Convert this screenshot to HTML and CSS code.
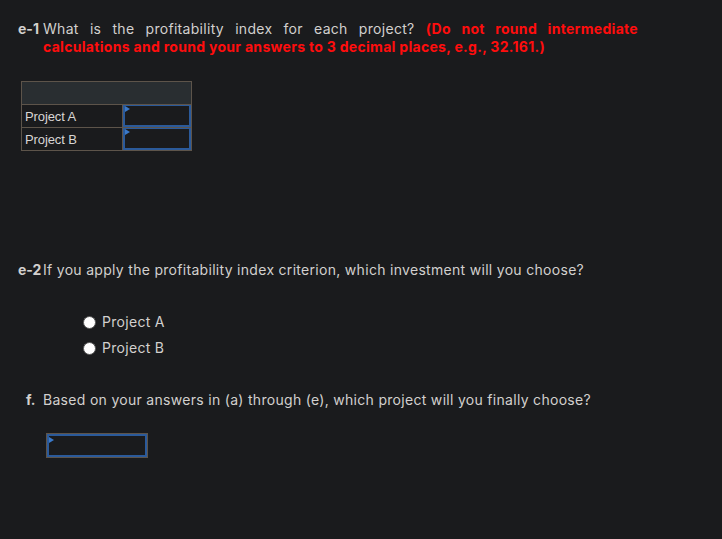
FILE: index.html
```html
<!DOCTYPE html>
<html>
<head>
<meta charset="utf-8">
<link rel="stylesheet" href="styles.css">
</head>
<body>
<div class="page">
  <div class="q q-e1">
    <span class="lbl">e-1</span>
    <p class="qtext">What is the profitability index for each project? <strong class="note">(Do not round intermediate</strong> <strong class="note">calculations and round your answers to 3 decimal places, e.g., 32.161.)</strong></p>
  </div>

  <table class="grid">
    <tr class="head"><th colspan="2"></th></tr>
    <tr><td class="name">Project A</td><td class="cell"><div class="inp"><span class="tri"></span></div></td></tr>
    <tr><td class="name">Project B</td><td class="cell"><div class="inp"><span class="tri"></span></div></td></tr>
  </table>

  <div class="q q-e2">
    <span class="lbl">e-2</span>
    <p class="qtext single">If you apply the profitability index criterion, which investment will you choose?</p>
  </div>

  <div class="radios">
    <label class="radio"><span class="dot"></span>Project A</label>
    <label class="radio"><span class="dot"></span>Project B</label>
  </div>

  <div class="q q-f">
    <span class="lbl lbl-f">f.</span>
    <p class="qtext single">Based on your answers in (a) through (e), which project will you finally choose?</p>
  </div>

  <div class="select"><span class="tri"></span></div>
</div>
</body>
</html>
```

FILE: styles.css
```css
html, body {
  margin: 0;
  padding: 0;
  background: #1a1b1d;
}
body {
  width: 722px;
  height: 539px;
  overflow: hidden;
  font-family: "Inter", "Open Sans", sans-serif;
  color: #d2d0ce;
}
.page {
  padding: 20px 0 0 18px;
}
.q {
  display: flex;
  align-items: flex-start;
  font-size: 14px;
  line-height: 18px;
  letter-spacing: 0.3px;
}
.lbl {
  flex: 0 0 25px;
  font-weight: 700;
  letter-spacing: 0;
  color: #d2d0ce;
}
.lbl-f {
  flex-basis: 17px;
  padding-left: 8px;
}
.qtext {
  margin: 0;
  width: 595px;
  text-align: justify;
}
.qtext.single {
  text-align: left;
  width: auto;
}
.note {
  color: #ff0d0d;
  font-weight: 700;
}
.grid {
  margin: 25px 0 0 3px;
  border-collapse: collapse;
  font-family: "Liberation Sans", Arial, sans-serif;
  font-size: 13px;
  color: #d8d6d4;
}
.grid th, .grid td {
  border: 1px solid #5d544a;
  padding: 0;
  height: 22px;
}
.grid .head th {
  background: #292e31;
}
.grid .name {
  width: 97px;
  padding-left: 3px;
  letter-spacing: -0.1px;
}
.grid .cell {
  width: 68px;
  padding: 0;
}
.inp {
  position: relative;
  height: 19px;
  margin: 0;
  border: 2px solid #2b5a9a;
  border-top-width: 1px;
}
.tri {
  position: absolute;
  left: 0;
  top: 0;
  width: 0;
  height: 0;
  border-top: 3px solid transparent;
  border-bottom: 3px solid transparent;
  border-left: 5px solid #3a79c9;
}
.q-e2 {
  margin-top: 110px;
}
.radios {
  display: flex;
  flex-direction: column;
  gap: 8px;
  margin: 34px 0 0 65px;
  font-size: 14px;
  line-height: 18px;
  letter-spacing: 0.3px;
}
.radio {
  display: flex;
  align-items: center;
  gap: 6px;
}
.dot {
  width: 11px;
  height: 11px;
  border-radius: 50%;
  background: #ffffff;
  border: 1px solid #555;
}
.q-f {
  margin-top: 34px;
}
.select {
  position: relative;
  margin: 25px 0 0 29px;
  width: 96px;
  height: 19px;
  border: 2px solid #2b5a9a;
  box-shadow: 0 0 0 1px #5d544a;
}
.select .tri {
  left: 0;
  top: 1px;
}
```
